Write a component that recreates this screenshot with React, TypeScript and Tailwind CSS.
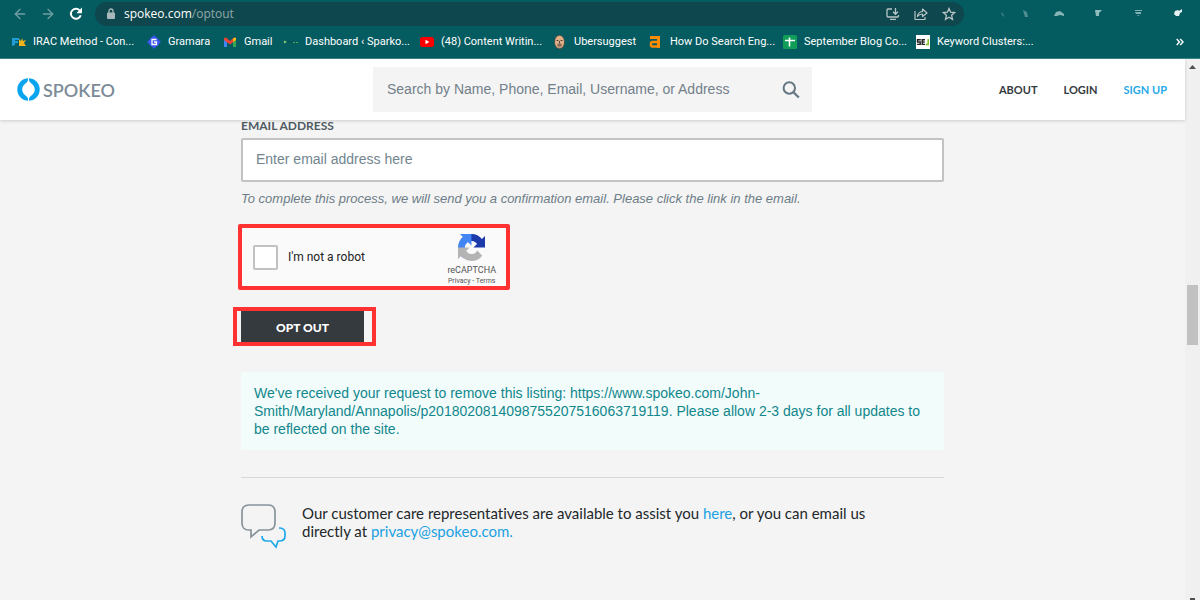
import React from "react";
import { ArrowLeft, ArrowRight } from "lucide-react";

const bookmarks: { label: string; width: string; icon: React.ReactNode }[] = [
  {
    label: "IRAC Method - Con...",
    width: "w-[135px]",
    icon: (
      <>
        <path d="M0 3h7v2H3v1h3v2H3v2l-3 1z" fill="#1f9bd8" />
        <path d="M7 4l2 2 1-3 1 3 3-1-2 3 2 3H7z" fill="#f2b41c" />
      </>
    ),
  },
  {
    label: "Gramara",
    width: "w-[76px]",
    icon: (
      <>
        <path d="M7 0l7 7-7 7-7-7z" fill="#3b55f0" />
        <path d="M3 3h8v8H3z" fill="#3b55f0" />
        <path d="M9.500 4.500H5v5h4.500V7H7" fill="none" stroke="#fff" strokeWidth="1.300" />
      </>
    ),
  },
  {
    label: "Gmail",
    width: "w-[61px]",
    icon: (
      <>
        <path d="M1 3v9h3V6z" fill="#4285f4" />
        <path d="M13 3v9h-3V6z" fill="#34a853" />
        <path d="M1 3l2-.5 4 3.500 4-3.500 2 .5v2L7 9.500 1 5z" fill="#ea4335" />
        <path d="M10 3.500l2-1 1 .5v2l-3 2z" fill="#fbbc04" />
      </>
    ),
  },
  {
    label: "Dashboard ‹ Sparko...",
    width: "w-[136px]",
    icon: (
      <>
        <path d="M0 5.500l3 1.500-3 1.500z" fill="#8ccf6a" />
        <path d="M3 7h6" stroke="#094b4c" strokeWidth="1" />
        <path d="M9 7.500h2M12 7.500h2" stroke="#56a84f" strokeWidth="1" />
      </>
    ),
  },
  {
    label: "(48) Content Writin...",
    width: "w-[133px]",
    icon: (
      <>
        <rect y="2" width="14" height="10" rx="2.500" fill="#ff0000" />
        <path d="M5.500 4.800v4.400L9.300 7z" fill="#fff" />
      </>
    ),
  },
  {
    label: "Ubersuggest",
    width: "w-[96px]",
    icon: (
      <>
        <ellipse cx="6.500" cy="7" rx="5" ry="6.700" fill="#e0ae87" stroke="#40342c" strokeWidth=".6" />
        <path d="M3.500 5.500h2M7.500 5.500h2M4.500 10h4M6.500 6v2.500" stroke="#574034" strokeWidth="1" />
        <path d="M4 9q2.500-1.500 5 0l-1 3.500H5z" fill="#7e6555" opacity=".55" />
      </>
    ),
  },
  {
    label: "How Do Search Eng...",
    width: "w-[134px]",
    icon: (
      <>
        <path d="M1 1h10v12H8V4H1z" fill="#ff8b00" />
        <path d="M8 7H3.500Q2 7 2 8.500v1.500q0 1.500 1.500 1.500H8" fill="none" stroke="#ff8b00" strokeWidth="2.400" />
      </>
    ),
  },
  {
    label: "September Blog Co...",
    width: "w-[133px]",
    icon: (
      <>
        <rect width="14" height="14" rx="1.500" fill="#0f9d58" />
        <path d="M2 5.500h10M6.500 2.500v9" stroke="#fff" strokeWidth="1.600" />
      </>
    ),
  },
  {
    label: "Keyword Clusters:...",
    width: "w-[130px]",
    icon: (
      <>
        <rect width="14" height="14" fill="#fff" />
        <path d="M4.800 4.700H1.500V7h2.700v2.400H1M9 4.700H6.200v4.700H9M6.200 7h2.500" stroke="#222" strokeWidth="1.400" fill="none" />
        <path d="M12.200 4v5.400H9.800" stroke="#7ac01f" strokeWidth="1.500" fill="none" />
      </>
    ),
  },
];

function BrowserBar() {
  return (
    <div className="h-[59px] border-b border-[#3b8588] bg-[#045b60]">
      <div className="flex h-7 items-center">
        <div className="flex w-[95px] shrink-0 items-center gap-3 pl-3 text-[#6fa0a2]">
          <button aria-label="Back"><ArrowLeft size={16} strokeWidth={2} /></button>
          <button aria-label="Forward"><ArrowRight size={16} strokeWidth={2} /></button>
          <button aria-label="Reload" className="text-white">
            <svg width="16" height="16" viewBox="0 0 16 16" fill="none">
              <path d="M12.700 9.200A5 5 0 1 1 11.600 4.400" stroke="currentColor" strokeWidth="2" />
              <path d="M14 1.500v5.700H8.300z" fill="currentColor" />
            </svg>
          </button>
        </div>
        <div className="flex h-6 flex-1 items-center rounded-full bg-[#0e474d] pr-2 pl-3">
          <svg width="8" height="12" viewBox="0 0 8 12" fill="none">
            <path d="M2 5V3a2 2 0 0 1 4 0v2" stroke="#a9b9bb" strokeWidth="1.300" />
            <rect y="4.500" width="8" height="6.500" rx="1" fill="#a9b9bb" />
          </svg>
          <p className="ml-[9px] flex-1 font-['Open_Sans','Noto_Sans',sans-serif] text-xs text-[#91a9ab]">
            <span className="text-white">spokeo.com</span>/optout
          </p>
          <div className="flex items-center gap-[14px] text-[#b9c5c6]">
            <button aria-label="Install app">
              <svg width="14" height="14" viewBox="0 0 14 14" fill="none" stroke="currentColor" strokeWidth="1.300">
                <path d="M6 2H2q-1 0-1 1v6q0 1 1 1h9.500q1 0 1-1V8M4 12.300h6M9.500 1v6M7 4.800l2.500 2.500L12 4.800" />
              </svg>
            </button>
            <button aria-label="Share">
              <svg width="14" height="14" viewBox="0 0 14 14" fill="none" stroke="currentColor" strokeWidth="1.200">
                <path d="M1 4v8.500h10V10M3.500 9.500Q4 5 8.500 4.500V2L13 6 8.500 9.500V7Q5.500 7 3.500 9.500z" strokeLinejoin="round" />
              </svg>
            </button>
            <button aria-label="Bookmark this page">
              <svg width="14" height="14" viewBox="0 0 14 14" fill="none" stroke="currentColor" strokeWidth="1.300">
                <path d="M7 1.500l1.600 3.700 4 .4-3 2.700.9 4L7 10.200l-3.500 2.100.9-4-3-2.700 4-.4z" />
              </svg>
            </button>
          </div>
        </div>
        <svg className="w-[236px] shrink-0" height="24" viewBox="0 0 236 24" fill="#a9cccd">
          <path d="M38 10l2 3v2l-3-3z" opacity=".3" />
          <path d="M59 8l4 2 1 5h-3l-1-3z" opacity=".45" />
          <path d="M90 14l2-4 4-1 4 3v2l-4-1-3 1z" opacity=".8" />
          <path d="M131 8h7l-3 3v3h-3z" opacity=".85" />
          <path d="M171 8h7v1h-7zM171 10h6v2h-5zM173 13h3l-2 1z" opacity=".75" />
          <path d="M211 9l3-1 1 1 3-2v3l-2 1-1 3h-3l-2-2z" fill="#e5f2f1" />
        </svg>
      </div>
      <nav aria-label="Bookmarks" className="flex h-7 items-center pr-4 pl-3 font-['Roboto',sans-serif] text-[11px] text-white">
        {bookmarks.map((b) => (
          <a key={b.label} href="#" className={`flex shrink-0 items-center gap-[7px] whitespace-nowrap ${b.width}`}>
            <svg width="14" height="14" viewBox="0 0 14 14" className="shrink-0">{b.icon}</svg>
            <span className="pt-px">{b.label}</span>
          </a>
        ))}
        <button aria-label="More bookmarks" className="ml-auto">
          <svg width="8" height="8" viewBox="0 0 8 8" fill="none" stroke="white" strokeWidth="1.400">
            <path d="M.7 1l2.800 3L.7 7M4.200 1L7 4 4.200 7" />
          </svg>
        </button>
      </nav>
    </div>
  );
}

function Header() {
  return (
    <header className="relative flex h-[61px] items-center justify-between bg-white pr-[18px] pl-[17px] shadow-[0_1px_3px_rgba(0,0,0,0.16)]">
      <a href="#" aria-label="Spokeo" className="flex w-[356px] items-center gap-[3px] font-['Lato',sans-serif] text-lg font-semibold text-[#7d8b97]">
        <svg width="23" height="23" viewBox="0 0 23 23">
          <circle cx="11.500" cy="11.500" r="11.200" fill="#0ba4ee" />
          <path
            d="M11 0h1v2c.3 3.500 5.800 4 5.800 9.500S12.300 17.500 12 21v2h-1v-2c-.3-3.500-5.800-4-5.800-9.500S10.700 5.500 11 2z"
            fill="#fff"
          />
        </svg>
        SPOKEO
      </a>
      <form className="flex h-[45px] w-[439px] items-center bg-[#f4f4f4] pr-3 pl-[14px]" onSubmit={(e) => e.preventDefault()}>
        <input
          aria-label="Search"
          placeholder="Search by Name, Phone, Email, Username, or Address"
          className="min-w-0 flex-1 bg-transparent text-[14px] outline-none placeholder:text-[#72808a]"
        />
        <button aria-label="Search">
          <svg width="18" height="18" viewBox="0 0 18 18" fill="none" stroke="#667782">
            <circle cx="7.300" cy="7" r="5.700" strokeWidth="2" />
            <path d="M11.500 11.200l5.300 5.300" strokeWidth="2.300" />
          </svg>
        </button>
      </form>
      <nav className="flex w-[355px] justify-end gap-[26px] pt-[2px] font-['Lato',sans-serif] text-[11px] font-bold text-[#343a3e]">
        <a href="#">ABOUT</a>
        <a href="#">LOGIN</a>
        <a href="#" className="text-[#27a9e8]">SIGN UP</a>
      </nav>
    </header>
  );
}

function Captcha() {
  return (
    <div className="mt-[17px] -ml-[3px] flex h-[66px] w-[272px] justify-between rounded-[2px] border-4 border-[#ff3131] bg-[#fafafa] pr-[10px] pl-[11px] font-['Roboto',sans-serif]">
      <label className="flex items-center gap-[10px] text-[12px] text-[#222]">
        <input type="checkbox" className="size-[25px] appearance-none rounded-[2px] border-2 border-[#c1c1c1] bg-white" />
        I'm not a robot
      </label>
      <div className="flex flex-col items-center pt-[6px] text-[#555]">
        <svg width="27" height="27" viewBox="0 0 64 64">
          <path
            d="M64 31.955l-.033-1.370V4.687l-7.160 7.160C50.948 4.674 42.033.093 32.050.093c-10.400 0-19.622 4.960-25.458 12.640l11.736 11.860a15.550 15.550 0 0 1 4.754-5.334c2.050-1.600 4.952-2.906 8.968-2.906.485 0 .860.057 1.135.163 4.976.393 9.288 3.140 11.828 7.124l-8.307 8.307L64 31.953"
            fill="#1c3aa9"
          />
          <path
            d="M31.862.094l-1.370.033H4.594l7.160 7.160C4.580 13.147 0 22.060 0 32.046c0 10.400 4.960 19.622 12.640 25.458L24.500 45.768a15.550 15.550 0 0 1-5.334-4.754c-1.600-2.050-2.906-4.952-2.906-8.968 0-.485.057-.860.163-1.135.393-4.976 3.140-9.288 7.124-11.828l8.307 8.307L31.860.095"
            fill="#4285f4"
          />
          <path
            d="M.001 32.045l.033 1.370v25.898l7.160-7.160c5.860 7.173 14.774 11.754 24.760 11.754 10.400 0 19.622-4.960 25.458-12.640l-11.736-11.860a15.550 15.550 0 0 1-4.754 5.334c-2.050 1.600-4.952 2.906-8.968 2.906-.485 0-.860-.057-1.135-.163-4.976-.393-9.288-3.140-11.828-7.124l8.307-8.307c-10.522.040-22.400.066-27.295-.005"
            fill="#b4b4b4"
          />
        </svg>
        <span className="mt-[3px] text-[9px] leading-[12px]">reCAPTCHA</span>
        <p className="text-[7px] leading-[10px]">
          <a href="#">Privacy</a> - <a href="#">Terms</a>
        </p>
      </div>
    </div>
  );
}

function OptOutForm() {
  return (
    <form onSubmit={(e) => e.preventDefault()}>
      <label htmlFor="email" className="block font-['Lato',sans-serif] text-xs leading-[12px] font-bold text-[#505b63]">
        EMAIL ADDRESS
      </label>
      <input
        id="email"
        type="email"
        placeholder="Enter email address here"
        className="mt-[6px] block h-11 w-full rounded-[2px] border-2 border-[#c2c2c4] bg-white px-[13px] pb-[2px] text-[14px] outline-none placeholder:text-[#72858f]"
      />
      <p className="mt-2 text-[13px] leading-[17px] text-[#6c7d87] italic">
        To complete this process, we will send you a confirmation email. Please click the link in the email.
      </p>
      <Captcha />
      <div className="mt-[17px] -ml-2 w-[143px] border-4 border-[#ff3131] pr-2 pl-1">
        <button className="block h-[31px] w-full bg-[#343a3e] pt-[2px] font-['Lato',sans-serif] text-[12px] font-black text-white">
          OPT OUT
        </button>
      </div>
    </form>
  );
}

export default function App() {
  return (
    <div className="flex min-h-screen flex-col bg-[#f4f4f4] font-['Liberation_Sans',sans-serif]">
      <BrowserBar />
      <div className="flex flex-1">
        <div className="min-w-0 flex-1">
          <Header />
          <main className="mx-auto max-w-[703px]">
            <OptOutForm />
            <div className="mt-[26px] bg-[#f2fdfb] px-[13px] py-3 text-[14px] leading-[18px] text-[#11868d]">
              <p>
                We've received your request to remove this listing: https://www.spokeo.com/John-<br />
                Smith/Maryland/Annapolis/p2018020814098755207516063719119. Please allow 2-3 days for all updates to
                be reflected on the site.
              </p>
            </div>
            <hr className="mt-[27px] border-[#d8d8d8]" />
            <section className="mt-[26px] flex gap-4">
              <svg width="45" height="45" viewBox="0 0 45 45" fill="none" strokeWidth="1.700" className="shrink-0">
                <path d="M10 26H8q-7 0-7-7V8q0-7 7-7h19q7 0 7 7v11q0 7-7 7H18l-8 7z" stroke="#87939b" />
                <path d="M38 24q6 0 6 5v3q0 5-6 5h-1l-2 6-5-6h-4q-5 0-5-5" stroke="#20a8ea" />
              </svg>
              <p className="font-['Lato',sans-serif] text-[15px] leading-[18px] text-[#22272a] [font-variant-ligatures:none]">
                Our customer care representatives are available to assist you <a href="#" className="text-[#20a1e2]">here</a>, or you can email us<br />
                directly at <a href="#" className="text-[#20a1e2]">privacy@spokeo.com.</a>
              </p>
            </section>
          </main>
        </div>
        <div aria-hidden="true" className="flex w-[15px] flex-col items-center bg-[#f0f0f0] pt-[6px]">
          <svg width="7" height="4" viewBox="0 0 7 4"><path d="M0 4l3.500-4L7 4z" fill="#505050" /></svg>
          <div className="mt-[216px] h-[60px] w-[11px] bg-[#c1c1c1]" />
          <div className="mt-auto h-[2px] w-[5px] bg-[#505050]" />
        </div>
      </div>
    </div>
  );
}
